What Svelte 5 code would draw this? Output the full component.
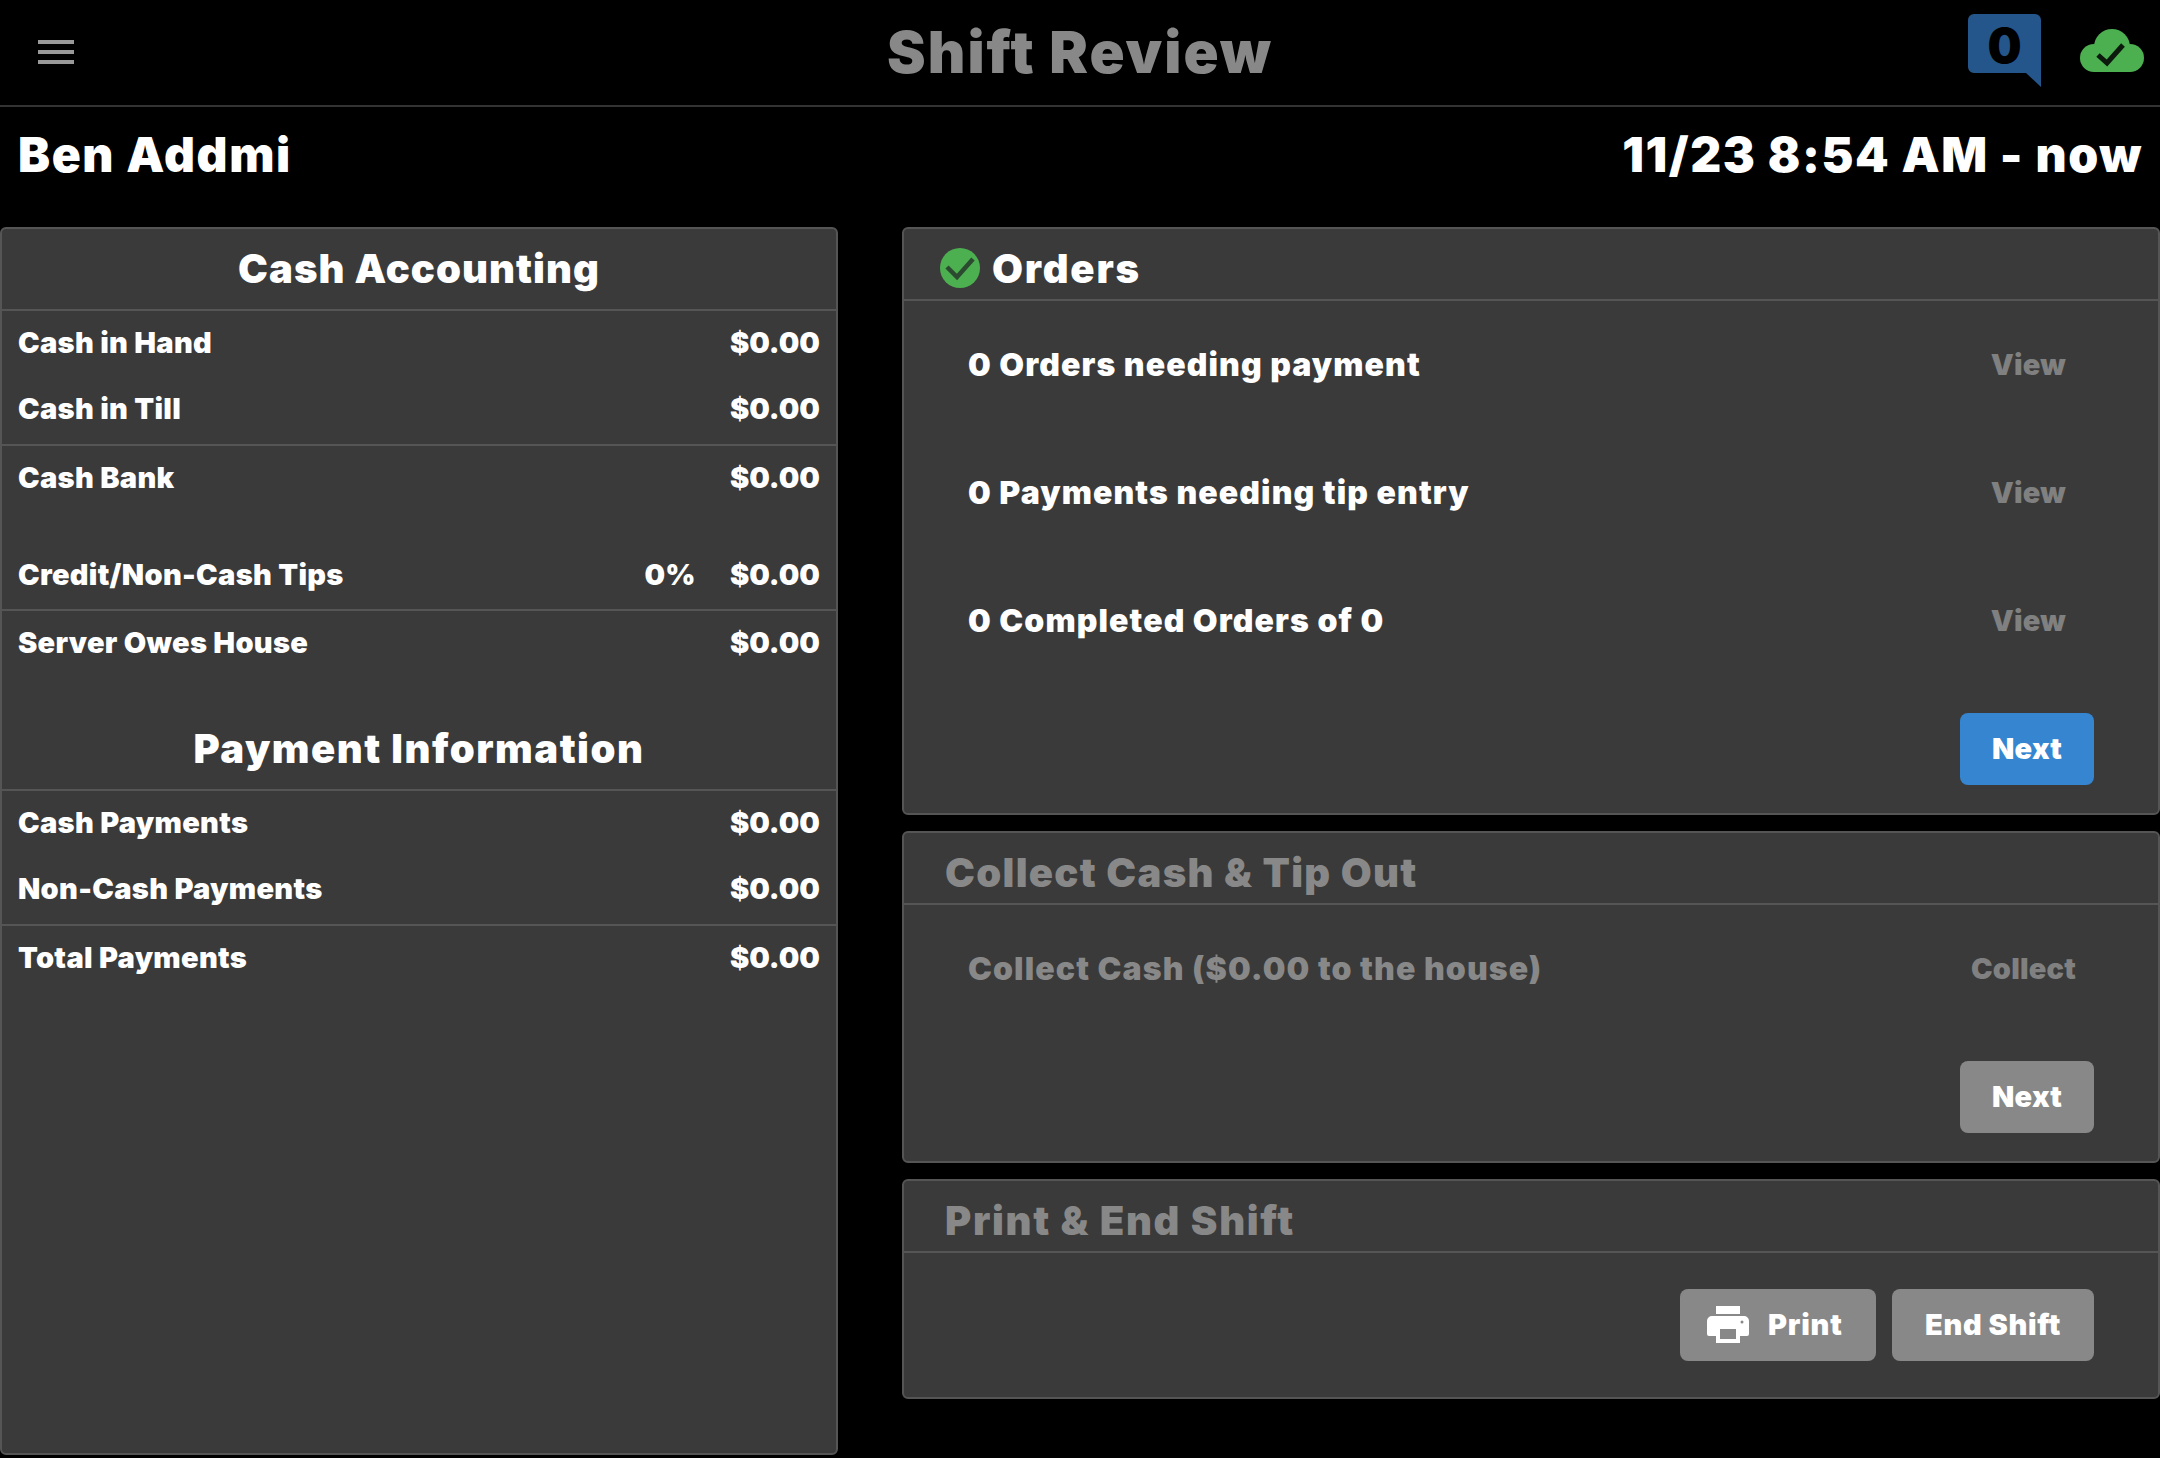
<script>
  const orders = ['0 Orders needing payment', '0 Payments needing tip entry', '0 Completed Orders of 0'];
</script>

<div class="page">
  <header class="top">
    <button class="menu" aria-label="Menu"><span></span><span></span><span></span></button>
    <h1>Shift Review</h1>
    <div class="status">
      <div class="badge">
        <svg width="73" height="73" viewBox="0 0 73 73"><path d="M6 0H67a6 6 0 0 1 6 6V73L58 59H6a6 6 0 0 1-6-6V6a6 6 0 0 1 6-6Z" fill="#24568c"/></svg>
        <span>0</span>
      </div>
      <svg class="cloud" width="64" height="43" viewBox="0 0 64 43"><g fill="#4caf50"><circle cx="32" cy="18" r="18"/><circle cx="14" cy="29" r="14"/><circle cx="50" cy="29" r="14"/><rect x="14" y="18" width="36" height="25"/></g><path d="M18 26l9 8 16-18" fill="none" stroke="#0c1a0d" stroke-width="5"/></svg>
    </div>
  </header>

  <div class="who">
    <div>Ben Addmi</div>
    <div class="time">11/23 8:54 AM - now</div>
  </div>

  <main class="cols">
    <section class="panel left">
      <h2 class="ctitle tight">Cash Accounting</h2>
      <div class="group lined pad">
        <div class="row"><span>Cash in Hand</span><b>$0.00</b></div>
        <div class="row"><span>Cash in Till</span><b>$0.00</b></div>
      </div>
      <div class="group lined">
        <div class="row"><span>Cash Bank</span><b>$0.00</b></div>
        <div class="spacer"></div>
        <div class="row"><span>Credit/Non-Cash Tips</span><em>0%</em><b>$0.00</b></div>
      </div>
      <div class="group">
        <div class="row"><span>Server Owes House</span><b>$0.00</b></div>
      </div>
      <div class="spacer big"></div>
      <h2 class="ctitle">Payment Information</h2>
      <div class="group lined pad">
        <div class="row"><span>Cash Payments</span><b>$0.00</b></div>
        <div class="row"><span>Non-Cash Payments</span><b>$0.00</b></div>
      </div>
      <div class="group">
        <div class="row"><span>Total Payments</span><b>$0.00</b></div>
      </div>
    </section>

    <div class="right">
      <section class="panel">
        <h2 class="head check">
          <svg width="40" height="40" viewBox="0 0 40 40"><circle cx="20" cy="20" r="20" fill="#4caf50"/><path d="M7 19l10 10L33 11" fill="none" stroke="#2b4a30" stroke-width="4.500"/></svg>
          Orders
        </h2>
        <div class="task-list orders">
          {#each orders as o}
            <div class="task"><span>{o}</span><a href="#view" class="link">View</a></div>
          {/each}
        </div>
        <div class="foot"><button class="btn blue">Next</button></div>
      </section>

      <section class="panel off">
        <h2 class="head">Collect Cash &amp; Tip Out</h2>
        <div class="task-list collects">
          <div class="task"><span>Collect Cash ($0.00 to the house)</span><a href="#collect" class="link">Collect</a></div>
        </div>
        <div class="foot"><button class="btn">Next</button></div>
      </section>

      <section class="panel off">
        <h2 class="head wide">Print &amp; End Shift</h2>
        <div class="foot foot3">
          <button class="btn print">
            <svg width="42" height="37" viewBox="0 0 42 37"><path d="M9 0H33V8H9ZM5 10H37a5 5 0 0 1 5 5V28a2 2 0 0 1-2 2H33V37H9V30H2a2 2 0 0 1-2-2V15a5 5 0 0 1 5-5Z" fill="#fff"/><rect x="13" y="23" width="16" height="10" fill="#888"/><circle cx="35" cy="16" r="1.500" fill="#888"/></svg>
            Print
          </button>
          <button class="btn endshift">End Shift</button>
        </div>
      </section>
    </div>
  </main>
</div>

<style>
  :global(body) { margin: 0; background: #000; }
  .page { width: 2160px; height: 1458px; background: #000; color: #fff; font-family: Inter, "Liberation Sans", sans-serif; font-weight: 900; overflow: hidden; }
  .top { height: 105px; border-bottom: 2px solid #333; display: flex; align-items: center; justify-content: space-between; position: relative; padding: 0 16px 0 38px; }
  .menu { width: 36px; height: 24px; padding: 0; border: 0; background: none; display: flex; flex-direction: column; justify-content: space-between; margin-top: -2px; }
  .menu span { height: 4px; background: #999; display: block; }
  h1 { position: absolute; left: 0; right: 0; top: 19px; margin: 0; text-align: center; font-size: 58px; line-height: 66px; font-weight: 900; color: #888; letter-spacing: 2px; pointer-events: none; }
  .status { display: flex; align-items: flex-start; gap: 39px; height: 88px; padding-top: 5px; box-sizing: border-box; }
  .badge { position: relative; width: 73px; height: 73px; }
  .badge svg { display: block; }
  .badge span { position: absolute; left: 0; width: 73px; top: 7px; text-align: center; color: #000; font-size: 48px; line-height: 50px; }
  .cloud { margin-top: 15px; }
  .who { height: 120px; display: flex; justify-content: space-between; align-items: flex-start; padding: 19px 17px 0 18px; box-sizing: border-box; font-size: 48px; line-height: 58px; letter-spacing: 1.6px; }
  .cols { display: grid; grid-template-columns: 838px 1258px; gap: 64px; height: 1228px; }
  .panel { background: #3a3a3a; border: 2px solid #555; border-radius: 6px; box-sizing: border-box; }
  .left { height: 1228px; }
  .right { display: flex; flex-direction: column; gap: 16px; }
  h2 { margin: 0; font-weight: 900; }
  .ctitle { height: 82px; box-sizing: border-box; border-bottom: 2px solid #555; text-align: center; font-size: 40px; line-height: 80px; letter-spacing: 1.5px; }
  .ctitle.tight { letter-spacing: 1.05px; }
  .group.lined { border-bottom: 2px solid #555; }
  .group.pad { padding-bottom: 1px; }
  .row { height: 66px; box-sizing: border-box; display: flex; align-items: center; padding: 0 16px 3px; font-size: 29px; letter-spacing: 0.3px; }
  .row span { flex: 1; }
  .row b { letter-spacing: 0; }
  .row em { font-style: normal; margin-right: 34px; }
  .spacer { height: 31px; }
  .spacer.big { height: 32px; }
  .head { height: 72px; box-sizing: border-box; border-bottom: 2px solid #555; display: flex; align-items: center; gap: 12px; padding: 8px 0 0 36px; font-size: 40px; letter-spacing: 1.3px; }
  .head.check { letter-spacing: 1.8px; }
  .head.wide { letter-spacing: 1.7px; }
  .off .head { color: #888; padding-left: 41px; }
  .off { color: #888; }
  .task-list { padding: 0 64px; }
  .task { height: 128px; box-sizing: border-box; padding-bottom: 2px; display: flex; align-items: center; justify-content: space-between; font-size: 32px; letter-spacing: 1.1px; }
  .link { color: #808080; text-decoration: none; font-size: 29px; letter-spacing: 0.2px; }
  .orders .link { margin-right: 28px; }
  .collects .link { margin-right: 18px; }
  .foot { display: flex; justify-content: flex-end; gap: 16px; padding: 28px 64px 28px 0; }
  .foot3 { padding: 36px 64px 36px 0; }
  .btn { height: 72px; width: 134px; border: 0; border-radius: 8px; background: #888; color: #fff; font: inherit; font-size: 29px; letter-spacing: 0.3px; display: flex; align-items: center; justify-content: center; padding: 0 0 2px; box-sizing: border-box; }
  .blue { background: #3585d0; }
  .print { width: 196px; gap: 19px; justify-content: flex-start; padding: 0 0 2px 27px; letter-spacing: 0.8px; }
  .endshift { width: 202px; letter-spacing: 0.6px; }
</style>
